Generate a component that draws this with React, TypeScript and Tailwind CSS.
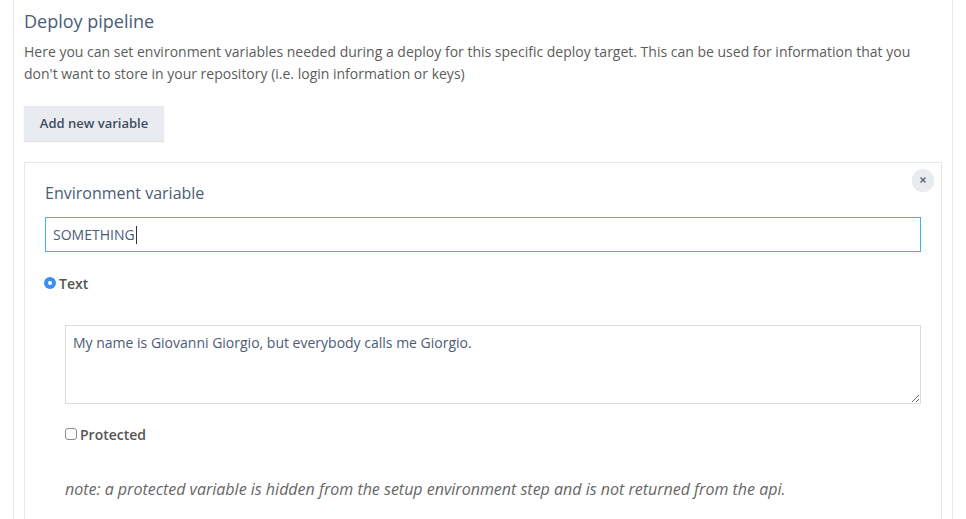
import React from "react";

const font = { fontFamily: '"Open Sans", "Noto Sans", sans-serif' };

export default function App() {
  return (
    <div className="min-h-[519px] bg-white" style={font}>
      <div className="ml-[13px] w-[940px] min-h-[519px] border-x border-[#ebebeb] px-[10px] pt-[9px]">
        <h2 className="text-[18px] leading-6 text-[#4b5b78]">Deploy pipeline</h2>
        <p className="mt-[8px] text-[14px] leading-[22px] text-[#5c5c5c]">
          Here you can set environment variables needed during a deploy for this specific deploy target. This can be used for information that you don't want to store in your repository (i.e. login information or keys)
        </p>
        <button className="mt-[21px] h-[35px] w-[140px] bg-[#e8ecf0] text-[13px] font-semibold text-[#3f4d63] shadow-[0_1px_1px_rgba(0,0,0,0.12)]">
          Add new variable
        </button>

        <div className="relative mt-[21px] border border-[#e8e8e8] px-[20px] pt-[19px] pb-[24px]">
          <button className="absolute right-[7px] top-[6px] flex h-[22px] w-[22px] items-center justify-center rounded-full bg-[#e9ecef] shadow-[0_1px_1px_rgba(0,0,0,0.1)]">
            <svg width="6" height="6" viewBox="0 0 6 6">
              <path d="M0.5 0.5 L5.5 5.5 M5.5 0.5 L0.5 5.5" stroke="#55607a" strokeWidth="1.4" />
            </svg>
          </button>

          <label className="block text-[16px] leading-[22px] text-[#4b5b78]">Environment variable</label>
          <div className="mt-[13px] flex h-[35px] items-center border border-[#3db6e6] pl-[7px] text-[14px] text-[#4b5b78]">
            SOMETHING
            <span className="ml-px inline-block h-[18px] w-px bg-[#333]" />
          </div>

          <div className="mt-[21px] flex h-5 items-center -ml-px">
            <span className="flex h-[12px] w-[12px] items-center justify-center rounded-full bg-[#3a8ef6]">
              <span className="h-[4px] w-[4px] rounded-full bg-white" />
            </span>
            <span className="ml-[3px] text-[14px] font-semibold text-[#555]">Text</span>
          </div>

          <div className="ml-[20px]">
            <textarea
              className="mt-[32px] block h-[79px] w-full border border-[#dcdcdc] px-[7px] pt-[6px] text-[14px] leading-[22px] text-[#4b5b78] outline-none"
              defaultValue="My name is Giovanni Giorgio, but everybody calls me Giorgio."
            />

            <div className="mt-[20px] flex h-5 items-center">
              <span className="inline-block h-[12px] w-[12px] rounded-[3px] border border-[#8a8a8a] bg-white" />
              <span className="ml-[3px] text-[14px] font-semibold text-[#555]">Protected</span>
            </div>

            <p className="mt-[34px] text-[16px] italic leading-[22px] text-[#666]">
              note: a protected variable is hidden from the setup environment step and is not returned from the api.
            </p>
          </div>
        </div>
      </div>
    </div>
  );
}
